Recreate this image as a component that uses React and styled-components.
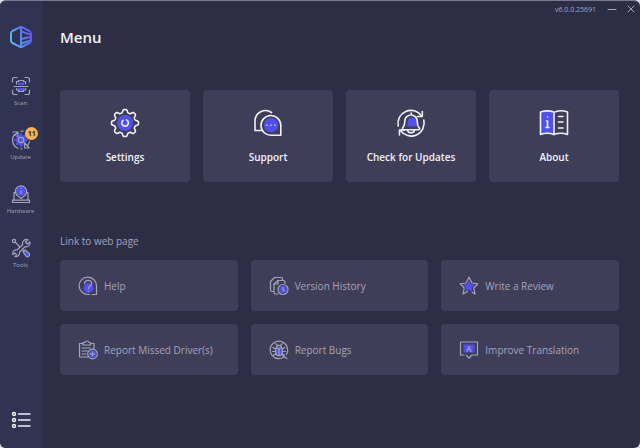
import styled, { createGlobalStyle } from "styled-components";

const colors = {
  page: "#2d2e45",
  sidebar: "#303351",
  card: "#3e3e58",
  accent: "#4f50ee",
  text: "#f1f1f8",
  muted: "#a3a4bb",
  badge: "#fbb04c",
};

const GlobalStyle = createGlobalStyle`
  * {
    box-sizing: border-box;
  }

  body {
    margin: 0;
    background: #d9dbe6;
    font-family: "Open Sans", "Noto Sans", sans-serif;
    color: ${colors.text};
  }

  a {
    color: inherit;
    text-decoration: none;
  }
`;

const Window = styled.div`
  display: grid;
  grid-template-columns: 42px 1fr;
  min-height: 100vh;
  overflow: hidden;
  background: ${colors.page};
  border-top: 1px solid #77798f;
  border-radius: 6px;
`;

const Sidebar = styled.aside`
  display: flex;
  flex-direction: column;
  align-items: center;
  padding: 24px 1px 18px 0;
  background: ${colors.sidebar};
`;

const IconButton = styled.button`
  display: flex;
  padding: 0;
  border: 0;
  background: none;
  color: ${(props) => props.$color || colors.text};
  cursor: pointer;
`;

const MenuButton = styled(IconButton)`
  margin-top: auto;
`;

const Nav = styled.nav`
  display: flex;
  flex-direction: column;
  gap: 22px;
  margin-top: 27px;
`;

const NavItem = styled.a`
  position: relative;
  display: flex;
  flex-direction: column;
  align-items: center;
  gap: 2px;
  color: ${colors.muted};
  font-size: 6px;
  font-weight: 500;
  line-height: 10px;
`;

const Badge = styled.span`
  position: absolute;
  top: -3px;
  right: -4px;
  width: 13px;
  height: 13px;
  border-radius: 50%;
  background: ${colors.badge};
  color: #24253a;
  font-size: 7px;
  font-weight: 700;
  line-height: 13px;
  text-align: center;
`;

const Main = styled.main`
  display: flex;
  flex-direction: column;
  padding: 0 21px 20px 18px;
`;

const TitleBar = styled.header`
  display: flex;
  justify-content: flex-end;
  align-items: center;
  gap: 12px;
  height: 16px;
  margin-right: -15px;
  color: ${colors.muted};
  font-size: 7px;
  font-weight: 500;
`;

const Title = styled.h1`
  margin: 8px 0 41px;
  font-size: 15px;
  font-weight: 600;
  line-height: 24px;
`;

const Cards = styled.div`
  display: grid;
  grid-template-columns: repeat(4, 1fr);
  gap: 13px;
`;

const Card = styled.button`
  display: flex;
  flex-direction: column;
  align-items: center;
  gap: 10px;
  height: 92px;
  padding: 18px 0 0;
  border: 0;
  border-radius: 4px;
  background: ${colors.card};
  color: ${colors.text};
  font: 600 10px/18px "Open Sans", "Noto Sans", sans-serif;
  cursor: pointer;
`;

const Subtitle = styled.h2`
  margin: 50px 0 10px;
  color: ${colors.muted};
  font-size: 10px;
  font-weight: 500;
  line-height: 18px;
`;

const Links = styled.div`
  display: grid;
  grid-template-columns: repeat(3, 1fr);
  gap: 13px;
`;

const LinkCard = styled.a`
  display: flex;
  align-items: center;
  gap: 6px;
  height: 51px;
  padding-left: 18px;
  border-radius: 4px;
  background: ${colors.card};
  color: ${colors.muted};
  font-size: 10px;
  font-weight: 500;
`;

const Svg = styled.svg`
  display: block;
  width: ${(props) => props.$size}px;
  height: ${(props) => props.$size}px;
  overflow: visible;
  fill: none;
  stroke: currentColor;
  stroke-width: ${(props) => props.$stroke || 1};
  stroke-linecap: round;
  stroke-linejoin: round;

  .accent {
    fill: ${colors.accent};
    stroke: none;
  }

  .ground {
    fill: ${colors.card};
  }

  text {
    fill: currentColor;
    stroke: none;
    text-anchor: middle;
  }
`;

const Large = ({ children }) => (
  <Svg $size={30} $stroke={1.6} viewBox="0 0 30 30" aria-hidden="true">
    {children}
  </Svg>
);

const Small = ({ children }) => (
  <Svg $size={20} $stroke={1.2} viewBox="0 0 20 20" aria-hidden="true">
    {children}
  </Svg>
);

// Outline of a cog with soft teeth, centred on (c, c)
const cogPath = (c, radius, depth, teeth = 8) => {
  const steps = 160;
  const points = [];
  for (let i = 0; i < steps; i++) {
    const a = (i / steps) * Math.PI * 2;
    const r = radius + depth * Math.tanh(1.8 * Math.cos(a * teeth));
    points.push(
      `${(c + r * Math.sin(a)).toFixed(2)} ${(c - r * Math.cos(a)).toFixed(2)}`
    );
  }
  return `M${points.join("L")}Z`;
};

const Logo = () => (
  <Svg $size={24} $stroke={2} viewBox="0 0 24 24" role="img" aria-label="Logo">
    <defs>
      <linearGradient
        id="logo"
        gradientUnits="userSpaceOnUse"
        x1="2"
        y1="16"
        x2="22"
        y2="8"
      >
        <stop offset="0" stopColor="#55b7f5" />
        <stop offset="0.5" stopColor="#5686f3" />
        <stop offset="1" stopColor="#6457e8" />
      </linearGradient>
    </defs>
    <g stroke="url(#logo)">
      <path d="M10.500 2.300 3.500 6Q2 6.900 2 8.500v7q0 1.600 1.500 2.500l7 3.700q1.500.8 3 0l7-3.700q1.500-.9 1.500-2.500v-7Q22 6.900 20.500 6l-7-3.700q-1.500-.8-3 0Z" />
      <path d="M12 2v20M12 6.400l9.500 3.200M12 14l9.500-2M12 18.500l9.500-3" />
    </g>
  </Svg>
);

const ScanIcon = () => (
  <Small>
    <path d="M1.500 6V3.500q0-2 2-2H6M14 1.500h2.500q2 0 2 2V6M18.500 14v2.500q0 2-2 2H14M6 18.500H3.500q-2 0-2-2V14" />
    <path className="accent" d="M7 6.500h6v2.500H7zM7 12h6v3H7z" />
    <path d="M5.500 8V5.500h2v-1h5v1h2V8M5.500 12.500V14h2v1.500h5V14h2v-1.500M3 10.500h14" />
  </Small>
);

const UpdateIcon = () => (
  <Small>
    <path className="accent" d={cogPath(10, 6, 1)} />
    <circle cx="10" cy="10" r="2.700" />
    <path d="M3.500 4.500a8.800 8.800 0 0 0 3.500 13.700M10 1.200h2M16.500 15.500a8.800 8.800 0 0 0 2-4M10 18.800h1" />
    <path d="M2 2h5v5M7 2 3.500 5.500M18.500 18h-5v-5M13.500 13l4 4" />
  </Small>
);

const HardwareIcon = () => (
  <Small>
    <path d="M5 8.500H3V16h14V8.500h-2M1.500 16.200h17v2.300h-17Z" />
    <circle className="accent" cx="10" cy="7" r="5" />
    <path d="M10 14.500 6 11.300a5.600 5.600 0 1 1 8 0Z" />
    <path d="M10 6.800v3M10 4.300v.1" />
  </Small>
);

const ToolsIcon = () => (
  <Small>
    <path d="M4.500 4.500 8.500 8.500M11.500 11.500l1.500 1.500" />
    <circle cx="3" cy="3" r="1.600" />
    <path d="M17 1.800a4 4 0 0 0-5.300 5L5.900 12a3.600 3.600 0 0 0-4 4.600L4 15l1.800 1.800L4 18.600a3.600 3.600 0 0 0 4.400-4.300L14 8.800a4 4 0 0 0 4.800-5L16.300 6l-2-2Z" />
    <path
      d="m12 14 2-2 4.300 3.500a2.200 2.200 0 0 1-3 3Z"
      fill={colors.accent}
    />
  </Small>
);

const ListIcon = () => (
  <Svg $size={20} $stroke={1.4} viewBox="0 0 20 20" aria-hidden="true">
    {[4, 10, 16].map((y) => (
      <g key={y}>
        <circle cx="3" cy={y} r="1.500" />
        <path d={`M7.500 ${y}h11.500`} />
      </g>
    ))}
  </Svg>
);

const SettingsIcon = () => (
  <Large>
    <path d={cogPath(15, 12, 1.6)} />
    <circle className="accent" cx="15" cy="15" r="8" />
    <path d="M13 12.300a3.300 3.300 0 1 0 3.500-.4" />
  </Large>
);

const SupportIcon = () => (
  <Large>
    <path d="M18.500 4.500A10.500 10.500 0 0 0 2 13v9.500h7" />
    <path className="ground" d="M27.800 27.300H18.500a9.900 9.900 0 1 1 9.300-9.900Z" />
    <circle className="accent" cx="18" cy="17.200" r="7.200" />
    <path d="M14 17.200h.01M18 17.200h.01M22 17.200h.01" />
  </Large>
);

const BellIcon = () => (
  <Large>
    <path d="M2.200 18A13 13 0 0 1 25.500 7.800M27.800 12A13 13 0 0 1 4.500 22.500" />
    <path d="M26.300 3.500v5h-5M3.500 27v-5h5" />
    <path
      className="accent"
      d="M11 18.500c.8-2 .7-4 .9-6a4.500 4.500 0 0 1 8.400 0c.3 2 .2 4.500.7 6Z"
    />
    <path d="M15.200 5v2M13.500 7.300c-3 .8-4.700 3-4.700 6.200 0 4-.8 4.500-2.200 6.500-.5 1 0 1.700 1 1.700h14.800c1.200 0 1.500-1 .8-1.800-1.500-2-2-2.500-2-6.400 0-3.200-1.700-5.400-4.700-6.200" />
    <path d="M11.500 22c.3 3.800 6.700 3.800 7 0" />
  </Large>
);

const BookIcon = () => (
  <Large>
    <path
      d="M1.500 4c4.500-1.500 9-1.500 13.500 0v22.500c-4.500-1.700-9-1.700-13.500 0Z"
      fill={colors.accent}
    />
    <path d="M16.500 3.700c4-1.400 8-1.300 12 .3v22.500c-4.500-1.700-9-1.700-13.500 0" />
    <path d="M19.500 8.500h4.500M19.500 14h4.500M19.500 20h4.500" />
    <path d="M8.500 9v.1M7.500 13h1v6.500M7 19.500h3" />
  </Large>
);

const HelpIcon = () => (
  <Small>
    <path d="M14 18.500h4.500V10A8.700 8.700 0 1 0 10 18.500h1.500" />
    <circle className="accent" cx="10.500" cy="12" r="5" />
    <path d="M6.500 7.500c.5-4.500 7.500-4 7.200.2-.2 2.500-3.400 2.500-3.400 5.300M10.300 15.600v.1" />
  </Small>
);

const HistoryIcon = () => (
  <Small>
    <path d="M9 18H6.500q-1.500 0-1.500-1.500V8l4-3.500h5.500q1.500 0 1.500 1.500v1.500M5 8h4V4.800" />
    <path d="M4.500 15.500H3q-1.500 0-1.500-1.500V5.500l4-4H12q1.500 0 1.500 1.500v1" />
    <circle className="ground" cx="14" cy="13.500" r="5" />
    <circle className="accent" cx="14" cy="13.500" r="3.800" />
    <path d="M14 11.500v2.200l1.500 1" />
  </Small>
);

const StarIcon = () => (
  <Small>
    <path
      className="accent"
      d="m10 4.500 1.900 3.700 4 .6-3 2.900.7 4-3.600-1.900-3.600 1.900.7-4-3-2.900 4-.6Z"
    />
    <path d="m8.500 15.500-4.500 2.500 1.200-6L1.200 7.800 7 7l3-5.700L13 7l5.800.8L14.800 12l1.200 6-3-1.700" />
  </Small>
);

const ReportIcon = () => (
  <Small>
    <path d="M9.500 17H1.500V3.500H5M12.500 3.500H16V9" />
    <path d="M5 2.500h1.800q.2-1.500 2-1.500t2 1.500h1.700V5H5ZM4 8h8.500M4 11h6M4 14h4" />
    <circle className="ground" cx="14.500" cy="14" r="4.800" />
    <circle className="accent" cx="14.500" cy="14" r="3.700" />
    <path d="M14.500 12v4M12.500 14h4" />
  </Small>
);

const BugIcon = () => (
  <Small>
    <path d="M14.500 17.300A8.700 8.700 0 1 1 17.300 14.500M13.500 15.500l4.500 3" />
    <path
      d="M6.800 8h6.400v4.500a3.200 3.200 0 0 1-6.400 0Z"
      fill={colors.accent}
    />
    <path d="M7.500 8c0-3.500 5-3.500 5 0M8 5 6.700 3.700M12 5l1.300-1.300M10 8.500v6.500M6.500 9 4 7.500M6.500 11.500h-3M7 13.500 4.500 15.500M13.500 9 16 7.500M13.500 11.500h3M13 13.500l2.500 2" />
  </Small>
);

const TranslateIcon = () => (
  <Small>
    <path className="accent" d="M4.500 4.500h11v8h-11Z" />
    <path d="M5 15H1.500V2h17v13H13l-3 3-2.500-2.500" />
    <text x="10" y="11.500" fontSize="8" fontWeight="600">
      A
    </text>
  </Small>
);

const navItems = [
  { label: "Scan", Icon: ScanIcon },
  { label: "Update", Icon: UpdateIcon, badge: 11 },
  { label: "Hardware", Icon: HardwareIcon },
  { label: "Tools", Icon: ToolsIcon },
];

const cards = [
  { label: "Settings", Icon: SettingsIcon },
  { label: "Support", Icon: SupportIcon },
  { label: "Check for Updates", Icon: BellIcon },
  { label: "About", Icon: BookIcon },
];

const links = [
  { label: "Help", Icon: HelpIcon },
  { label: "Version History", Icon: HistoryIcon },
  { label: "Write a Review", Icon: StarIcon },
  { label: "Report Missed Driver(s)", Icon: ReportIcon },
  { label: "Report Bugs", Icon: BugIcon },
  { label: "Improve Translation", Icon: TranslateIcon },
];

const App = () => {
  return (
    <>
      <GlobalStyle />
      <Window>
        <Sidebar>
          <Logo />
          <Nav>
            {navItems.map(({ label, Icon, badge }) => (
              <NavItem href="#" key={label}>
                <Icon />
                {label}
                {badge && <Badge>{badge}</Badge>}
              </NavItem>
            ))}
          </Nav>
          <MenuButton aria-label="Menu">
            <ListIcon />
          </MenuButton>
        </Sidebar>
        <Main>
          <TitleBar>
            <span>v6.0.0.25691</span>
            <IconButton $color={colors.muted} aria-label="Minimize">
              <Svg $size={8} viewBox="0 0 8 8">
                <path d="M0 4.500h8" />
              </Svg>
            </IconButton>
            <IconButton $color={colors.muted} aria-label="Close">
              <Svg $size={6} viewBox="0 0 6 6">
                <path d="m0 0 6 6M6 0 0 6" />
              </Svg>
            </IconButton>
          </TitleBar>
          <Title>Menu</Title>
          <Cards>
            {cards.map(({ label, Icon }) => (
              <Card key={label}>
                <Icon />
                {label}
              </Card>
            ))}
          </Cards>
          <Subtitle>Link to web page</Subtitle>
          <Links>
            {links.map(({ label, Icon }) => (
              <LinkCard href="#" key={label}>
                <Icon />
                {label}
              </LinkCard>
            ))}
          </Links>
        </Main>
      </Window>
    </>
  );
};

export default App;
